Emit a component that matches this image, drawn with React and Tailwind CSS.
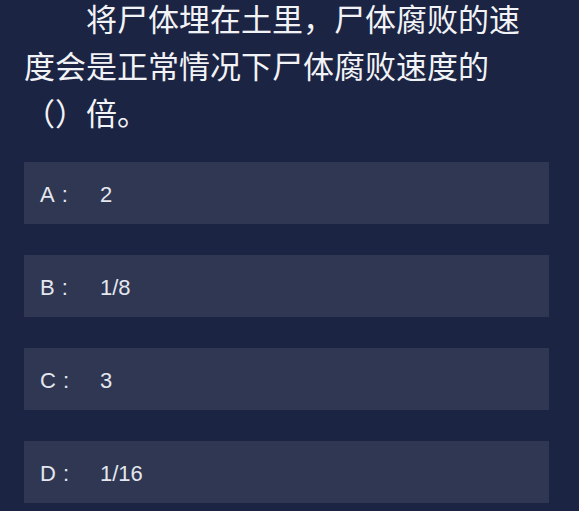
const options = [
    { key: "A", value: "2" },
    { key: "B", value: "1/8" },
    { key: "C", value: "3" },
    { key: "D", value: "1/16" },
];

export default function App() {
    return (
        <div
            className="w-[579px] h-[511px] overflow-hidden bg-[#1b2443] pl-6 pr-[30px]"
            style={{ fontFamily: '"Liberation Sans", "Noto Sans CJK SC", sans-serif' }}
        >
            <p
                className="-mt-[6px] w-[510px] text-[31px] leading-[47px] text-[#f2f3f6] indent-[62px]"
                style={{ fontFamily: '"Noto Sans CJK SC", sans-serif' }}
            >
                将尸体埋在土里，尸体腐败的速度会是正常情况下尸体腐败速度的（）倍。
            </p>

            <div className="mt-[27px] flex flex-col gap-[31px]">
                {options.map((opt) => (
                    <div
                        key={opt.key}
                        className="h-[62px] bg-[#2f3753] flex items-center pl-4 pt-[3px] text-[22px] text-[#e4e7ef]"
                    >
                        <span className="w-[60px] flex items-center">
                            {opt.key}
                            <span className="ml-[7px]">:</span>
                        </span>
                        <span>{opt.value}</span>
                    </div>
                ))}
            </div>
        </div>
    );
}
